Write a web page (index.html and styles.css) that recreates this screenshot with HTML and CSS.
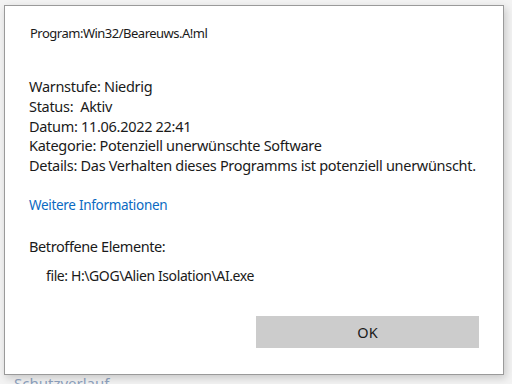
FILE: index.html
```
<!DOCTYPE html>
<html>
<head>
  <title>Windows-Sicherheit</title>
  <link rel="stylesheet" href="styles.css">
</head>
<body>
  <div class="backdrop">
    <div class="dialog">
      <div class="threat-name">Program:Win32/Beareuws.A!ml</div>

      <div class="details">
        <div>Warnstufe: Niedrig</div>
        <div>Status:&nbsp; Aktiv</div>
        <div>Datum: 11.06.2022 22:41</div>
        <div>Kategorie: Potenziell unerwünschte Software</div>
        <div>Details: Das Verhalten dieses Programms ist potenziell unerwünscht.</div>
      </div>

      <a class="more-link" href="#">Weitere Informationen</a>

      <div class="affected">Betroffene Elemente:</div>
      <div class="file">file: H:\GOG\Alien Isolation\AI.exe</div>

      <div class="actions">
        <button class="ok-btn">OK</button>
      </div>
    </div>
    <div class="behind">Schutzverlauf</div>
  </div>
</body>
</html>
```

FILE: styles.css
```
body {
  margin: 0;
  padding: 0;
  background-color: #f3f3f3;
  font-family: "Noto Sans", "Open Sans", sans-serif;
  color: #1a1a1a;
  overflow: hidden;
}

.backdrop {
  width: 512px;
  height: 384px;
  padding: 5px 0 0 4px;
  box-sizing: border-box;
}

.dialog {
  width: 500px;
  height: 370px;
  box-sizing: border-box;
  background-color: white;
  border: 1px solid #9a9a9a;
  box-shadow: 2px 3px 8px rgba(0,0,0,0.18);
  padding: 18px 24px 0 24px;
  display: flex;
  flex-direction: column;
  align-items: flex-start;
  position: relative;
  z-index: 1;
}

.threat-name {
  font-size: 13px;
  letter-spacing: -0.5px;
  line-height: 18px;
  margin-left: 1px;
}

.details {
  margin-top: 35px;
  font-size: 14.5px;
  letter-spacing: -0.3px;
  line-height: 19.75px;
  white-space: nowrap;
}

.more-link {
  margin-top: 19px;
  font-size: 13.5px;
  letter-spacing: -0.3px;
  line-height: 20px;
  color: #0b6ac2;
  text-decoration: none;
}

.affected {
  margin-top: 21px;
  font-size: 14.5px;
  letter-spacing: -0.4px;
  line-height: 20px;
}

.file {
  margin-top: 10px;
  margin-left: 17px;
  font-size: 14px;
  letter-spacing: -0.4px;
  line-height: 20px;
}

.actions {
  align-self: stretch;
  display: flex;
  justify-content: flex-end;
  margin-top: 30px;
}

.ok-btn {
  width: 223px;
  height: 32px;
  border: none;
  background-color: #cccccc;
  font-family: "Noto Sans", "Open Sans", sans-serif;
  font-size: 14.5px;
  color: #1a1a1a;
}

.behind {
  margin: -2px 0 0 10px;
  font-size: 15px;
  color: #8ea2bf;
}
```
